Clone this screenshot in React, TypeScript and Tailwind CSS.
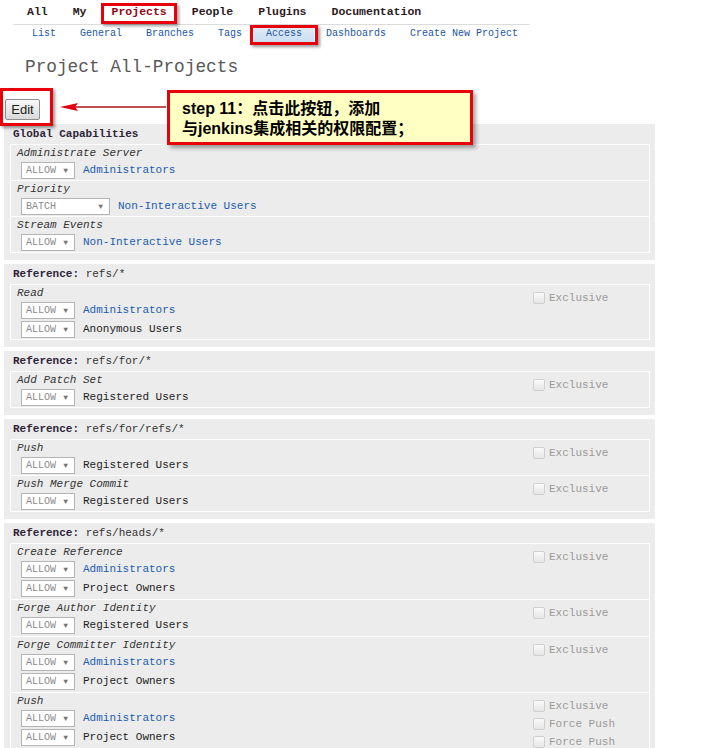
import React from 'react';

type Rule = { action: string; group: string; link?: boolean; wide?: boolean };
type Row = { label: string; rules: Rule[]; flags?: string[] };
type Section = { title?: string; ref?: string; loose?: boolean; rows: Row[] };

const mono = "font-['Liberation_Mono','DejaVu_Sans_Mono',monospace]";

const admin: Rule = { action: 'ALLOW', group: 'Administrators', link: true };
const owners: Rule = { action: 'ALLOW', group: 'Project Owners' };
const registered: Rule = { action: 'ALLOW', group: 'Registered Users' };

const sections: Section[] = [
  {
    title: 'Global Capabilities',
    rows: [
      { label: 'Administrate Server', rules: [admin] },
      { label: 'Priority', rules: [{ action: 'BATCH', group: 'Non-Interactive Users', link: true, wide: true }] },
      { label: 'Stream Events', rules: [{ action: 'ALLOW', group: 'Non-Interactive Users', link: true }] },
    ],
  },
  {
    ref: 'refs/*',
    rows: [{ label: 'Read', rules: [admin, { action: 'ALLOW', group: 'Anonymous Users' }], flags: ['Exclusive'] }],
  },
  {
    ref: 'refs/for/*',
    rows: [{ label: 'Add Patch Set', rules: [registered], flags: ['Exclusive'] }],
  },
  {
    ref: 'refs/for/refs/*',
    rows: [
      { label: 'Push', rules: [registered], flags: ['Exclusive'] },
      { label: 'Push Merge Commit', rules: [registered], flags: ['Exclusive'] },
    ],
  },
  {
    ref: 'refs/heads/*',
    loose: true,
    rows: [
      { label: 'Create Reference', rules: [admin, owners], flags: ['Exclusive'] },
      { label: 'Forge Author Identity', rules: [registered], flags: ['Exclusive'] },
      { label: 'Forge Committer Identity', rules: [admin, owners], flags: ['Exclusive'] },
      { label: 'Push', rules: [admin, owners], flags: ['Exclusive', 'Force Push', 'Force Push'] },
    ],
  },
];

const topMenu = ['All', 'My', 'Projects', 'People', 'Plugins', 'Documentation'];
const subMenu = ['List', 'General', 'Branches', 'Tags', 'Access', 'Dashboards', 'Create New Project'];

function Select({ value, wide }: { value: string; wide?: boolean }) {
  return (
    <div
      className={`flex items-center justify-between h-[17px] ${wide ? 'w-[89px]' : 'w-[54px]'} border border-[#b4b4b4] bg-white pl-[4px] pr-[6px] text-[10px] leading-none text-[#8a8a8a]`}
    >
      <span>{value}</span>
      <span className="text-[8px] text-[#777]">▼</span>
    </div>
  );
}

function Flag({ text }: { text: string }) {
  return (
    <div className="flex items-center h-[18px]">
      <span className="w-[12px] h-[12px] rounded-[2px] border border-[#cfcfcf] bg-gradient-to-b from-[#fafafa] to-[#e6e6e6]" />
      <span className="ml-[4px] text-[11px] text-[#9a9a9a]">{text}</span>
    </div>
  );
}

function PermissionRow({ row, first, loose }: { row: Row; first: boolean; loose?: boolean }) {
  return (
    <div className={`flex ${loose ? 'pb-[1px]' : ''} ${first ? '' : 'border-t border-white'}`}>
      <div className="flex-1">
        <div className="h-[16px] leading-[16px] pl-[6px] italic text-[11px] text-[#333]">{row.label}</div>
        {row.rules.map((r, i) => (
          <div key={i} className="flex items-center h-[19px] pl-[10px]">
            <Select value={r.action} wide={r.wide} />
            <span className={`ml-[8px] text-[11px] ${r.link ? 'text-[#1a5cb0]' : 'text-[#222]'}`}>{r.group}</span>
          </div>
        ))}
      </div>
      {row.flags && (
        <div className="w-[116px] pt-[4px]">
          {row.flags.map((f, i) => (
            <Flag key={i} text={f} />
          ))}
        </div>
      )}
    </div>
  );
}

function Panel({ section }: { section: Section }) {
  return (
    <div className="ml-[4px] w-[651px] mb-[4px] bg-[#ececec] pl-[6px] pr-[5px] pb-[7px]">
      <div className="h-[20px] leading-[20px] pl-[3px] text-[11px] text-[#2e2438]">
        {section.title ? (
          <span className="font-bold">{section.title}</span>
        ) : (
          <>
            <span className="font-bold">Reference:</span>
            <span className="text-[#333]"> {section.ref}</span>
          </>
        )}
      </div>
      <div className="border border-white">
        {section.rows.map((row, i) => (
          <PermissionRow key={i} row={row} first={i === 0} loose={section.loose} />
        ))}
      </div>
    </div>
  );
}

export default function App() {
  return (
    <div className={`relative w-[701px] h-[748px] overflow-hidden bg-white ${mono}`}>
      {/* top menu */}
      <div className="ml-[13px] w-[517px] h-[25px] border-b border-[#dcdcdc] flex items-center gap-[25px] pl-[14px]">
        {topMenu.map((m) => (
          <span key={m} className={`text-[11.5px] font-bold ${m === 'Projects' ? 'text-[#8f0a14]' : 'text-[#2e1a1e]'}`}>
            {m}
          </span>
        ))}
      </div>

      {/* sub menu */}
      <div className="flex h-[18px] pl-[20px]">
        {subMenu.map((m) => (
          <span
            key={m}
            className={`px-[12px] leading-[18px] text-[10px] text-[#2255a4] ${m === 'Access' ? 'bg-gradient-to-b from-[#e4eef9] to-[#c8dcf1]' : ''}`}
          >
            {m}
          </span>
        ))}
      </div>

      <div className="mt-[13px] ml-[25px] h-[22px] leading-[22px] text-[17.75px] text-[#585858]">
        Project All-Projects
      </div>

      <button className="block mt-[21px] ml-[5px] w-[35px] h-[21px] border border-[#8e8e8e] rounded-[2px] bg-gradient-to-b from-[#f8f8f8] to-[#dadada] text-[13px] text-[#222] font-['Liberation_Sans',Arial,sans-serif] leading-none">
        Edit
      </button>

      <div className="mt-[4px]">
        {sections.map((s, i) => (
          <Panel key={i} section={s} />
        ))}
      </div>

      {/* annotations */}
      <div className="absolute left-[101px] top-[3px] w-[76px] h-[21px] border-[3px] border-[#e8000b] shadow-[2px_2px_3px_rgba(0,0,0,0.4)]" />
      <div className="absolute left-[250px] top-[25px] w-[68px] h-[20px] border-[3px] border-[#e8000b] shadow-[2px_2px_3px_rgba(0,0,0,0.4)]" />
      <div className="absolute left-0 top-[88px] w-[53px] h-[38px] border-[3px] border-[#e8000b] shadow-[2px_2px_3px_rgba(0,0,0,0.4)]" />
      <svg className="absolute left-[58px] top-[100px]" width="110" height="14" viewBox="0 0 110 14">
        <line x1="14" y1="7" x2="108" y2="7" stroke="#c0504d" strokeWidth="2" />
        <path d="M2 7 L20 3 L17 7 L20 11 Z" fill="#e00010" />
      </svg>
      <div className="absolute left-[167px] top-[90px] w-[306px] h-[55px] border-[3px] border-[#e8000b] bg-[#ffffc4] shadow-[3px_3px_4px_rgba(0,0,0,0.35)] pl-[12px] pt-[6px] font-['Liberation_Sans','Noto_Sans_CJK_SC',sans-serif] font-bold text-[16px] leading-[20px] text-black">
        <div>step 11：点击此按钮，添加</div>
        <div>与jenkins集成相关的权限配置；</div>
      </div>
    </div>
  );
}
